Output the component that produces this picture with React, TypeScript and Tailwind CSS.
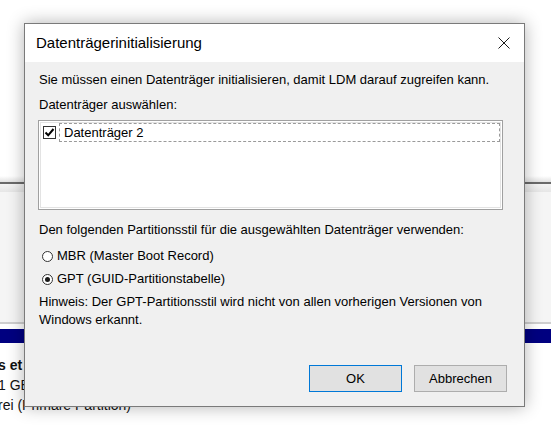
import React from 'react';

const CloseIcon: React.FC = () => (
  <svg width="12" height="12" viewBox="0 0 12 12" className="block">
    <path d="M0.5 0.5 L11.5 11.5 M11.5 0.5 L0.5 11.5" stroke="#1a1a1a" strokeWidth="1" fill="none" />
  </svg>
);

const CheckBox: React.FC = () => (
  <div className="w-[13px] h-[13px] border border-[#333] bg-white flex items-center justify-center shrink-0">
    <svg width="11" height="11" viewBox="0 0 11 11" className="block">
      <path d="M1.5 5.5 L4.2 8.3 L9.5 2" stroke="#000" strokeWidth="2" fill="none" />
    </svg>
  </div>
);

const Radio: React.FC<{ checked?: boolean }> = ({ checked }) => (
  <div className="w-[11px] h-[11px] rounded-full border border-[#333] bg-white flex items-center justify-center shrink-0">
    {checked && <div className="w-[5px] h-[5px] rounded-full bg-[#1a1a1a]" />}
  </div>
);

const App: React.FC = () => {
  return (
    <div className="relative w-[551px] h-[427px] overflow-hidden bg-white font-['Liberation_Sans',Arial,sans-serif] text-[#000]">
      {/* Disk management window in the background */}
      <div className="flex flex-col h-full">
        <div className="h-[176px] bg-white" />
        <div className="h-[6px] bg-gradient-to-b from-white to-[#e2e2e2]" />
        <div className="h-[2px] bg-[#6a6a6a]" />
        <div className="h-[8px] bg-gradient-to-b from-[#f4f4f4] to-[#e6e6e6]" />
        <div className="h-[130px] bg-[#f5f5f5]" />
        <div className="h-[2px] bg-[#cfcfcf]" />
        <div className="h-[5px] bg-white" />
        <div className="h-[14px] bg-[#000080]" />
        <div className="pt-[12px] -ml-[2px] text-[14px] leading-[20px] text-[#111] whitespace-nowrap">
          <div className="font-bold">s et</div>
          <div>1 GB</div>
          <div>rei (Primäre Partition)</div>
        </div>
      </div>

      {/* Dialog */}
      <div className="absolute left-[24px] top-[23px] w-[501px] h-[384px] border border-[#7a7a7a] bg-[#f0f0f0] flex flex-col shadow-[0_0_16px_rgba(0,0,0,0.3)]">
        <div className="h-[38px] bg-white flex items-center justify-between pl-[11px] pr-[14px]">
          <span className="text-[15px] text-[#000]">Datenträgerinitialisierung</span>
          <CloseIcon />
        </div>
        <div className="flex-1 flex flex-col pl-[14px] pr-[21px] text-[13px] leading-[18px] text-[#000]">
          <div className="mt-[9px]">Sie müssen einen Datenträger initialisieren, damit LDM darauf zugreifen kann.</div>
          <div className="mt-[7px]">Datenträger auswählen:</div>
          <div className="mt-[6px] -ml-[1px] h-[90px] border border-[#a0a0a0] bg-white p-[1px]">
            <div className="h-full border border-[#e3e3e3] bg-white">
              <div className="flex items-center h-[19px] pl-[2px]">
                <CheckBox />
                <div className="ml-[3px] flex-1 h-full flex items-center border border-dashed border-[#9a9a9a] pl-[4px]">
                  Datenträger 2
                </div>
              </div>
            </div>
          </div>
          <div className="mt-[11px]">Den folgenden Partitionsstil für die ausgewählten Datenträger verwenden:</div>
          <div className="mt-[8px] flex items-center gap-[4px] pl-[3px]">
            <Radio />
            <span>MBR (Master Boot Record)</span>
          </div>
          <div className="mt-[5px] flex items-center gap-[4px] pl-[3px]">
            <Radio checked />
            <span>GPT (GUID-Partitionstabelle)</span>
          </div>
          <div className="mt-[5px]">
            Hinweis: Der GPT-Partitionsstil wird nicht von allen vorherigen Versionen von
            <br />
            Windows erkannt.
          </div>
          <div className="mt-[36px] flex justify-end gap-[12px] -mr-[4px]">
            <button className="w-[93px] h-[27px] bg-[#e1e1e1] border border-[#0078d7] text-[13px]">OK</button>
            <button className="w-[93px] h-[27px] bg-[#e1e1e1] border border-[#adadad] text-[13px]">Abbrechen</button>
          </div>
        </div>
      </div>
    </div>
  );
};

export default App;
